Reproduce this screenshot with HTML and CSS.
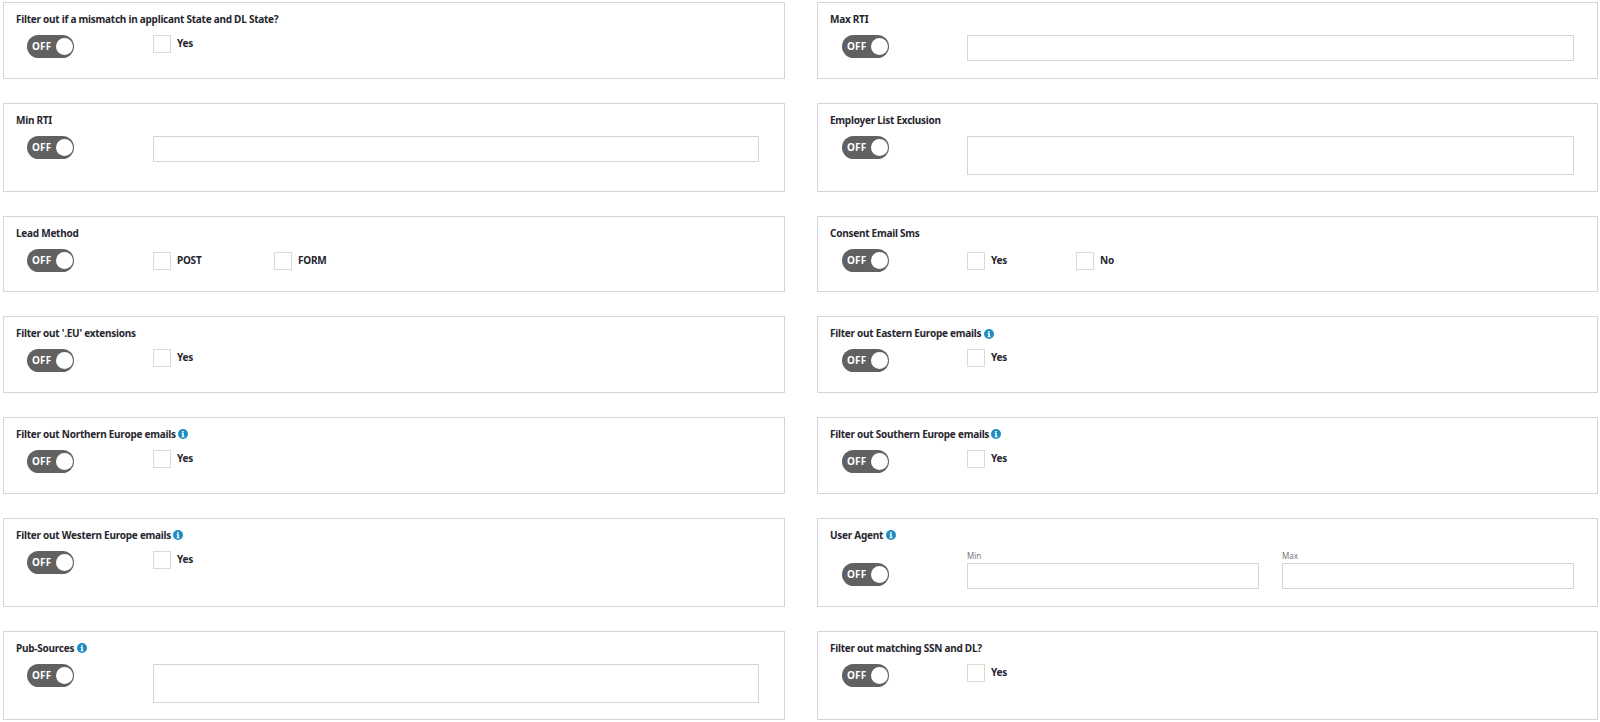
FILE: index.html
```html
<!DOCTYPE html>
<html lang="en">
<head>
<meta charset="utf-8">
<title>Filters</title>
<link rel="stylesheet" href="styles.css">
</head>
<body>
<svg class="defs" width="0" height="0" aria-hidden="true"><symbol id="info" viewBox="0 0 10 10"><circle cx="5" cy="5" r="5" fill="#1f8dc2"/><path d="M4.1 2h1.6v1.4H4.1zM3.7 4.1h2.1v3.2h.7v.9H3.6v-.9h.7V5h-.6z" fill="#fff"/></symbol></svg>
<main class="grid">
  <section class="card"><h3 class="title">Filter out if a mismatch in applicant State and DL State?</h3><div class="row"><div class="toggle"><span>OFF</span><i class="knob"></i></div><div class="controls"><label class="check"><span class="box"></span>Yes</label></div></div></section>
  <section class="card"><h3 class="title">Max RTI</h3><div class="row"><div class="toggle"><span>OFF</span><i class="knob"></i></div><div class="controls"><input class="field" type="text"></div></div></section>

  <section class="card tall"><h3 class="title">Min RTI</h3><div class="row"><div class="toggle"><span>OFF</span><i class="knob"></i></div><div class="controls"><input class="field" type="text"></div></div></section>
  <section class="card tall"><h3 class="title">Employer List Exclusion</h3><div class="row"><div class="toggle"><span>OFF</span><i class="knob"></i></div><div class="controls"><textarea class="field area"></textarea></div></div></section>

  <section class="card"><h3 class="title">Lead Method</h3><div class="row"><div class="toggle"><span>OFF</span><i class="knob"></i></div><div class="controls controls-low"><label class="check w-post"><span class="box"></span>POST</label><label class="check"><span class="box"></span>FORM</label></div></div></section>
  <section class="card"><h3 class="title">Consent Email Sms</h3><div class="row"><div class="toggle"><span>OFF</span><i class="knob"></i></div><div class="controls controls-low"><label class="check w-yes"><span class="box"></span>Yes</label><label class="check"><span class="box"></span>No</label></div></div></section>

  <section class="card"><h3 class="title">Filter out '.EU' extensions</h3><div class="row"><div class="toggle"><span>OFF</span><i class="knob"></i></div><div class="controls"><label class="check"><span class="box"></span>Yes</label></div></div></section>
  <section class="card"><h3 class="title">Filter out Eastern Europe emails <svg class="info"><use href="#info"/></svg></h3><div class="row"><div class="toggle"><span>OFF</span><i class="knob"></i></div><div class="controls"><label class="check"><span class="box"></span>Yes</label></div></div></section>

  <section class="card"><h3 class="title">Filter out Northern Europe emails <svg class="info"><use href="#info"/></svg></h3><div class="row"><div class="toggle"><span>OFF</span><i class="knob"></i></div><div class="controls"><label class="check"><span class="box"></span>Yes</label></div></div></section>
  <section class="card"><h3 class="title">Filter out Southern Europe emails <svg class="info"><use href="#info"/></svg></h3><div class="row"><div class="toggle"><span>OFF</span><i class="knob"></i></div><div class="controls"><label class="check"><span class="box"></span>Yes</label></div></div></section>

  <section class="card tall"><h3 class="title">Filter out Western Europe emails <svg class="info"><use href="#info"/></svg></h3><div class="row"><div class="toggle"><span>OFF</span><i class="knob"></i></div><div class="controls"><label class="check"><span class="box"></span>Yes</label></div></div></section>
  <section class="card tall"><h3 class="title">User Agent <svg class="info"><use href="#info"/></svg></h3><div class="row row-end"><div class="toggle"><span>OFF</span><i class="knob"></i></div><div class="controls pair"><label class="sub">Min<input class="field" type="text"></label><label class="sub">Max<input class="field" type="text"></label></div></div></section>

  <section class="card tall"><h3 class="title">Pub-Sources <svg class="info"><use href="#info"/></svg></h3><div class="row"><div class="toggle"><span>OFF</span><i class="knob"></i></div><div class="controls"><textarea class="field area"></textarea></div></div></section>
  <section class="card tall"><h3 class="title">Filter out matching SSN and DL?</h3><div class="row"><div class="toggle"><span>OFF</span><i class="knob"></i></div><div class="controls"><label class="check"><span class="box"></span>Yes</label></div></div></section>
</main>
</body>
</html>
```
FILE: styles.css
```css
* { box-sizing: border-box; }
html, body { margin: 0; padding: 0; background: #fff; overflow: hidden; }
body { font-family: "Noto Sans", "Open Sans", sans-serif; color: #26262e; }
.defs { position: absolute; }
.grid {
  display: grid;
  grid-template-columns: 782px 781px;
  column-gap: 32px;
  row-gap: 24px;
  padding: 2px 0 0 3px;
}
.card {
  height: 76.6px;
  border: 1px solid #d2d4e0;
  padding: 10px 12px 0;
}
.card.tall { height: 89.2px; }
.title {
  margin: 0;
  height: 13px;
  font-size: 10px;
  letter-spacing: -.25px;
  line-height: 13px;
  font-weight: 700;
  white-space: nowrap;
}
.info { width: 10px; height: 10px; vertical-align: -1.5px; }
.row { display: flex; align-items: flex-start; margin-top: 9px; }
.row-end { margin-top: 21px; }
.toggle {
  position: relative;
  flex: none;
  width: 47px;
  height: 23px;
  margin-left: 11px;
  margin-right: -1px;
  border-radius: 12px;
  background: #616161;
  color: #fff;
  font-size: 10px;
  font-weight: 700;
  letter-spacing: .2px;
  line-height: 23px;
  padding-left: 5px;
}
.knob {
  position: absolute;
  top: 3px;
  right: 1px;
  width: 17px;
  height: 17px;
  border-radius: 50%;
  background: #fff;
}
.controls { flex: 1; display: flex; margin-left: 80px; margin-right: 13px; }
.controls-low { margin-top: 3px; }
.card:nth-child(even) .toggle { margin-left: 12px; }
.card:nth-child(even) .controls { margin-left: 79px; margin-right: 11px; }
.check {
  display: flex;
  align-items: flex-start;
  font-size: 10px;
  letter-spacing: -.25px;
  font-weight: 700;
  line-height: 16px;
  height: 18px;
}
.box {
  width: 18px;
  height: 18px;
  border: 1px solid #dadad6;
  margin-right: 6px;
}
.w-post { width: 121px; }
.w-yes { width: 109px; }
.field {
  display: block;
  width: 100%;
  height: 26px;
  margin: 0;
  padding: 0;
  border: 1px solid #d2d4e0;
  border-radius: 0;
  background: #fff;
  outline: 0;
  resize: none;
}
.area { height: 39px; }
.pair { gap: 23px; }
.sub {
  flex: 1;
  display: block;
  margin-top: -14px;
  font-size: 8px;
  line-height: 13px;
  color: #777;
}
.sub .field { margin-top: 1px; }
```
